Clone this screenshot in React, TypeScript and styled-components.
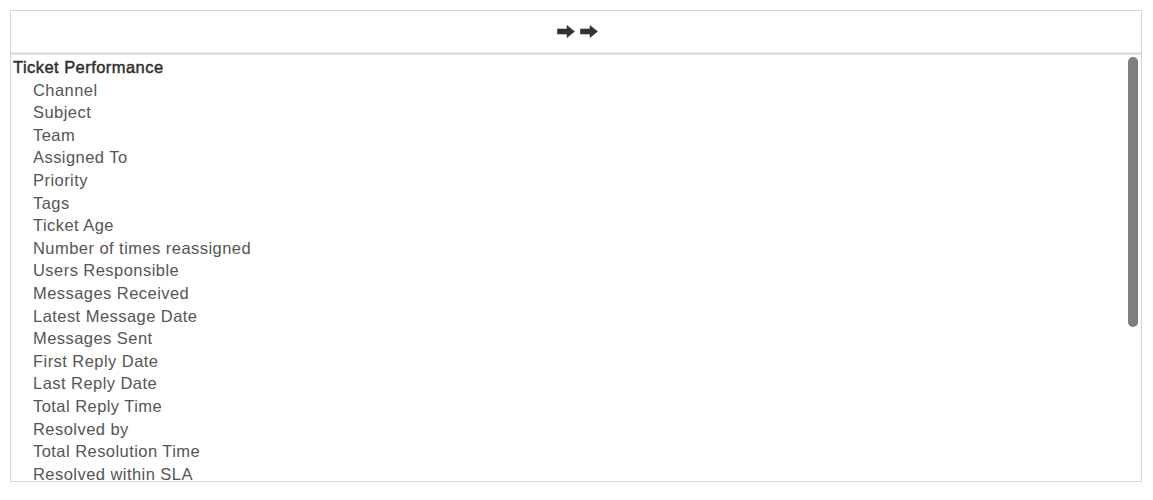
import React from "react";
import styled, { createGlobalStyle } from "styled-components";

const Global = createGlobalStyle`
  html, body { margin: 0; padding: 0; background: #ffffff; }
  body { font-family: "Liberation Sans", Arial, sans-serif; }
  * { box-sizing: border-box; }
`;

const Page = styled.div`
  padding: 10px 11px 0 10px;
`;

const Panel = styled.div`
  border: 1px solid #d6d6d6;
  height: 472px;
  display: flex;
  flex-direction: column;
  background: #fff;
`;

const Header = styled.div`
  height: 42px;
  flex: none;
  display: flex;
  align-items: center;
  justify-content: center;
  gap: 5px;
  border-bottom: 1px solid #ececec;
  box-shadow: 0 1px 0 #d2d2d2, 0 2px 0 #ececec;
  margin-bottom: 2px;
  padding-left: 2px;
`;

const Body = styled.div`
  flex: 1;
  min-height: 0;
  position: relative;
`;

const List = styled.div`
  height: 100%;
  overflow-y: scroll;
  padding-top: 1px;
  scrollbar-width: none;
  &::-webkit-scrollbar { display: none; }
`;

const Thumb = styled.div`
  position: absolute;
  top: 2px;
  right: 3px;
  width: 10px;
  height: 270px;
  border-radius: 5px;
  background: #7f7f7f;
`;

const Item = styled.div<{ $group?: boolean }>`
  height: 22.6px;
  line-height: 22.6px;
  font-size: 16.5px;
  white-space: nowrap;
  padding-left: ${(p) => (p.$group ? "2px" : "22px")};
  color: ${(p) => (p.$group ? "#2e2e2e" : "#555")};
  letter-spacing: 0.45px;
  -webkit-text-stroke: ${(p) => (p.$group ? "0.45px #2e2e2e" : "0")};
`;

const Arrow = () => (
  <svg width="18" height="13" viewBox="0 0 18 13">
    <path d="M0.5 4 H10 V0.5 L17.5 6.5 L10 12.5 V9 H0.5 Z" fill="#333" stroke="#333" strokeWidth="0.6" strokeLinejoin="round" />
  </svg>
);

const fields = [
  "Channel",
  "Subject",
  "Team",
  "Assigned To",
  "Priority",
  "Tags",
  "Ticket Age",
  "Number of times reassigned",
  "Users Responsible",
  "Messages Received",
  "Latest Message Date",
  "Messages Sent",
  "First Reply Date",
  "Last Reply Date",
  "Total Reply Time",
  "Resolved by",
  "Total Resolution Time",
  "Resolved within SLA",
  "First Reply within SLA",
  "Status",
  "Created Date",
  "Closed Date",
  "Reopened",
  "Customer",
  "Customer Email",
  "Satisfaction Rating",
  "Satisfaction Comment",
  "Ticket ID",
];

export default function App() {
  return (
    <>
      <Global />
      <Page>
        <Panel>
          <Header>
            <Arrow />
            <Arrow />
          </Header>
          <Body>
            <List>
              <Item $group>Ticket Performance</Item>
              {fields.map((f) => (
                <Item key={f}>{f}</Item>
              ))}
            </List>
            <Thumb />
          </Body>
        </Panel>
      </Page>
    </>
  );
}
